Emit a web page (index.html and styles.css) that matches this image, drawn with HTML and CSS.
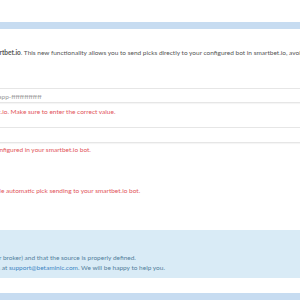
FILE: index.html
```html
<!DOCTYPE html>
<html lang="en">
    <head>
        <meta charset="UTF-8" />
        <meta name="viewport" content="width=device-width, initial-scale=1.0" />
        <title>Smartbet.io integration</title>
        <link rel="stylesheet" href="styles.css">
    </head>
    <body>
        <div class="page">
            <div class="bar"></div>
            <p class="intro">Connect your account to <b>smartbet.io</b>. This new functionality allows you to send picks directly to your configured bot in smartbet.io, avoiding any manual work.</p>

            <div class="input placeholder">smartbet-key-betaminic-app-ffffffffffffff</div>
            <p class="help">Your API token from smartbet.io. Make sure to enter the correct value.</p>

            <div class="input input-empty"></div>
            <p class="help">Enter your source name as configured in your smartbet.io bot.</p>

            <p class="help help-check">Check this check box to enable automatic pick sending to your smartbet.io bot.</p>

            <div class="alert">
                Check your exchange (or broker) and that the source is properly defined.<br>
                For any doubts, email us at <a href="#">support@betaminic.com</a>. We will be happy to help you.
            </div>

            <div class="bar bar-bottom"></div>
        </div>
    </body>
</html>
```

FILE: styles.css
```css
* {
    margin: 0;
    padding: 0;
    box-sizing: border-box;
}

body {
    overflow: hidden;
    font-family: Lato, "Noto Sans", sans-serif;
    font-size: 6.5px;
    line-height: 9.4px;
    color: #555;
    background: #fff;
}

.page {
    width: 800px;
    margin-left: -84px;
    white-space: nowrap;
}

.bar {
    height: 7px;
    margin-top: 22px;
    background: #c7dcf1;
}

.intro {
    margin-top: 19px;
}

.input {
    height: 15px;
    margin-top: 31px;
    padding: 2.5px 12px;
    border-top: 1px solid #e6e6e6;
    border-bottom: 1px solid #e6e6e6;
    box-shadow: 0 1px 1px rgba(0, 0, 0, .04);
}

.placeholder {
    color: #999;
}

.input-empty {
    height: 16px;
    margin-top: 10px;
}

.help {
    margin-top: 4px;
    color: #e2555a;
}

.input-empty + .help {
    margin-top: 2px;
}

.help-check {
    margin-top: 31.5px;
}

.alert {
    height: 48px;
    margin-top: 34.5px;
    padding: 23.5px 15.5px 0;
    background: #d9ebf6;
    color: #537f9c;
}

.alert a {
    color: #3f86c4;
    text-decoration: none;
}

.bar-bottom {
    height: 8px;
    margin-top: 15px;
}
```
